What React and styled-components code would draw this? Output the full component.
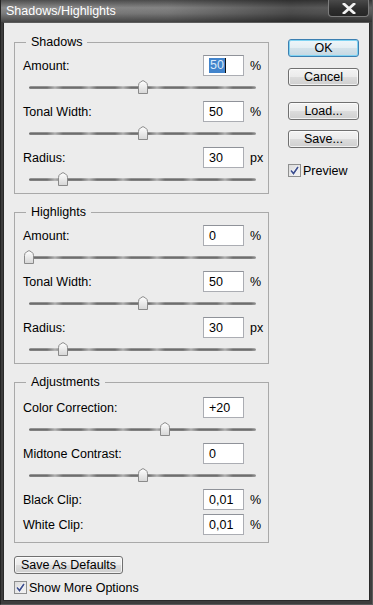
import styled, { createGlobalStyle, css } from "styled-components";

const GlobalStyle = createGlobalStyle`
  html, body {
    margin: 0;
    padding: 0;
    background: #3a3a3a;
  }
  body {
    font-family: "Liberation Sans", Arial, sans-serif;
    font-size: 12.5px;
    color: #000;
  }
`;

const Window = styled.div`
  width: 373px;
  height: 605px;
  display: flex;
  flex-direction: column;
  background: #3d3d3d;
  box-sizing: border-box;
  border-left: 1px solid #222;
  border-right: 1px solid #5a5a5a;
  border-bottom: 1px solid #5a5a5a;
`;

const TitleBar = styled.div`
  height: 22px;
  flex: none;
  display: flex;
  align-items: flex-start;
  background:
    linear-gradient(90deg, rgba(0,0,0,0) 0%, rgba(0,0,0,0.05) 45%, rgba(0,0,0,0.4) 78%, rgba(0,0,0,0.3) 100%),
    linear-gradient(180deg, #4e4e4e 0%, #8a8a8a 35%, #7c7c7c 60%, #474747 100%);
`;

const Title = styled.span`
  color: #fff;
  font-size: 12.5px;
  line-height: 22px;
  padding-left: 5px;
`;

const CloseButton = styled.div`
  margin-left: auto;
  margin-right: 3px;
  width: 41px;
  height: 17px;
  box-sizing: border-box;
  border: 1px solid #7c7c7c;
  border-top: none;
  border-radius: 0 0 4px 4px;
  background: linear-gradient(180deg, #4a4a4a 0%, #2f2f2f 55%, #262626 100%);
  display: flex;
  align-items: center;
  justify-content: center;
`;

const Frame = styled.div`
  flex: 1;
  display: flex;
  padding: 0 2px 3px 2px;
`;

const Body = styled.div`
  flex: 1;
  display: flex;
  background: #ececec;
  border: 1px solid #2a2a2a;
  border-top-color: #5c5c5c;
  padding: 11px 0 0 10px;
`;

const LeftColumn = styled.div`
  width: 255px;
  display: flex;
  flex-direction: column;
`;

const RightColumn = styled.div`
  width: 71px;
  margin-left: 19px;
  padding-top: 5px;
  display: flex;
  flex-direction: column;
  align-items: flex-start;
`;

const Group = styled.fieldset`
  margin: 0;
  padding: ${p => p.$top || 5}px 0 ${p => p.$bottom || 0}px 0;
  border: 1px solid #a9a9a9;
  min-width: 0;
  & + & {
    margin-top: ${p => p.$gap || 11}px;
  }
`;

const Legend = styled.legend`
  margin-left: 11px;
  padding: 0 5px;
  font-size: 12.5px;
  line-height: 16px;
`;

const FieldRow = styled.div`
  display: flex;
  align-items: center;
  height: 21px;
  padding-left: 8px;
  & + & {
    margin-top: 4px;
  }
`;

const Label = styled.span`
  flex: 1;
`;

const NumBox = styled.div`
  width: 41px;
  height: 21px;
  box-sizing: border-box;
  border: 1px solid #abadb3;
  border-top-color: #8f9299;
  background: #fff;
  padding-left: 5px;
  display: flex;
  align-items: center;
`;

const Selected = styled.span`
  background: #4284cc;
  color: #dbe9f8;
  line-height: 15px;
  padding: 0 1px;
  border-right: 1px solid #111;
`;

const Unit = styled.span`
  width: 24px;
  padding-left: 6px;
  box-sizing: border-box;
`;

const SliderRow = styled.div`
  height: 25px;
  padding: 10px 12px 0 14px;
  box-sizing: border-box;
`;

const Track = styled.div`
  position: relative;
  height: 3px;
  border-radius: 2px;
  background:
    repeating-linear-gradient(90deg, rgba(255,255,255,0) 0px, rgba(255,255,255,0) 18px, rgba(255,255,255,0.45) 26px, rgba(255,255,255,0) 34px),
    linear-gradient(180deg, #a5a5a5 0%, #6e6e6e 50%, #8a8a8a 100%);
`;

const Thumb = styled.svg`
  position: absolute;
  top: -6px;
  width: 10px;
  height: 14px;
  transform: translateX(-50%);
`;

const Button = styled.button`
  width: ${p => p.$width || 71}px;
  height: 18px;
  margin-top: ${p => p.$mt || 0}px;
  padding: 0;
  box-sizing: border-box;
  font-family: inherit;
  font-size: 12.5px;
  line-height: 16px;
  color: #000;
  border: 1px solid #707070;
  border-radius: 3px;
  background: linear-gradient(180deg, #f3f3f3 0%, #ebebeb 48%, #dcdcdc 52%, #cfcfcf 100%);
  box-shadow: inset 0 0 0 1px rgba(255,255,255,0.7);
  ${p => p.$default && css`
    border-color: #3c7fb1;
    box-shadow: inset 0 0 0 1px #7fd3f2;
    background: linear-gradient(180deg, #eef6fa 0%, #e4eef3 48%, #d3e2ea 52%, #c6d8e2 100%);
  `}
`;

const CheckRow = styled.label`
  display: flex;
  align-items: center;
  height: 13px;
  margin-top: ${p => p.$mt || 0}px;
  gap: 2px;
`;

const CheckBox = styled.span`
  width: 13px;
  height: 13px;
  box-sizing: border-box;
  border: 1px solid #8e8f8f;
  background: linear-gradient(135deg, #dcdcdc 0%, #f4f4f4 100%);
  display: flex;
  align-items: center;
  justify-content: center;
`;

const shadows = [
  { label: "Amount:", value: "50", unit: "%", pos: 50, selected: true },
  { label: "Tonal Width:", value: "50", unit: "%", pos: 50 },
  { label: "Radius:", value: "30", unit: "px", pos: 15 },
];

const highlights = [
  { label: "Amount:", value: "0", unit: "%", pos: 0 },
  { label: "Tonal Width:", value: "50", unit: "%", pos: 50 },
  { label: "Radius:", value: "30", unit: "px", pos: 15 },
];

const adjustSliders = [
  { label: "Color Correction:", value: "+20", unit: "", pos: 60 },
  { label: "Midtone Contrast:", value: "0", unit: "", pos: 50 },
];

const clips = [
  { label: "Black Clip:", value: "0,01", unit: "%" },
  { label: "White Clip:", value: "0,01", unit: "%" },
];

const SliderThumb = ({ pos }) => (
  <Thumb viewBox="0 0 10 14" style={{ left: `${pos}%` }}>
    <defs>
      <linearGradient id="thumbFill" x1="0" y1="0" x2="0" y2="1">
        <stop offset="0" stopColor="#ffffff" />
        <stop offset="1" stopColor="#d6d6d6" />
      </linearGradient>
    </defs>
    <path
      d="M0.5 13.5 V5.5 Q0.5 3.2 2.4 2 L5 0.6 L7.6 2 Q9.5 3.2 9.5 5.5 V13.5 Z"
      fill="url(#thumbFill)"
      stroke="#8a8a8a"
    />
  </Thumb>
);

const Field = ({ label, value, unit, selected }) => (
  <FieldRow>
    <Label>{label}</Label>
    <NumBox>{selected ? <Selected>{value}</Selected> : value}</NumBox>
    <Unit>{unit}</Unit>
  </FieldRow>
);

const SliderField = ({ item }) => (
  <>
    <Field {...item} />
    <SliderRow>
      <Track>
        <SliderThumb pos={item.pos} />
      </Track>
    </SliderRow>
  </>
);

const Check = ({ label, mt }) => (
  <CheckRow $mt={mt}>
    <CheckBox>
      <svg width="9" height="9" viewBox="0 0 9 9">
        <path d="M1 4.5 L3.5 7.5 L8 1" fill="none" stroke="#fff" strokeWidth="3" />
        <path d="M1 4.5 L3.5 7.5 L8 1" fill="none" stroke="#3d4f8f" strokeWidth="1.7" />
      </svg>
    </CheckBox>
    <span>{label}</span>
  </CheckRow>
);

export default function App() {
  return (
    <>
      <GlobalStyle />
      <Window>
        <TitleBar>
          <Title>Shadows/Highlights</Title>
          <CloseButton>
            <svg width="14" height="11" viewBox="0 0 14 11">
              <path d="M2 1 L12 10 M12 1 L2 10" stroke="#f2f2f2" strokeWidth="2.8" strokeLinecap="square" />
            </svg>
          </CloseButton>
        </TitleBar>
        <Frame>
          <Body>
            <LeftColumn>
              <Group>
                <Legend>Shadows</Legend>
                {shadows.map(item => (
                  <SliderField key={item.label} item={item} />
                ))}
              </Group>
              <Group>
                <Legend>Highlights</Legend>
                {highlights.map(item => (
                  <SliderField key={item.label} item={item} />
                ))}
              </Group>
              <Group $gap={10} $top={7} $bottom={7}>
                <Legend>Adjustments</Legend>
                {adjustSliders.map(item => (
                  <SliderField key={item.label} item={item} />
                ))}
                {clips.map(item => (
                  <Field key={item.label} {...item} />
                ))}
              </Group>
              <Button $width={109} $mt={13}>Save As Defaults</Button>
              <Check label="Show More Options" mt={7} />
            </LeftColumn>
            <RightColumn>
              <Button $default>OK</Button>
              <Button $mt={11}>Cancel</Button>
              <Button $mt={16}>Load...</Button>
              <Button $mt={10}>Save...</Button>
              <Check label="Preview" mt={16} />
            </RightColumn>
          </Body>
        </Frame>
      </Window>
    </>
  );
}
